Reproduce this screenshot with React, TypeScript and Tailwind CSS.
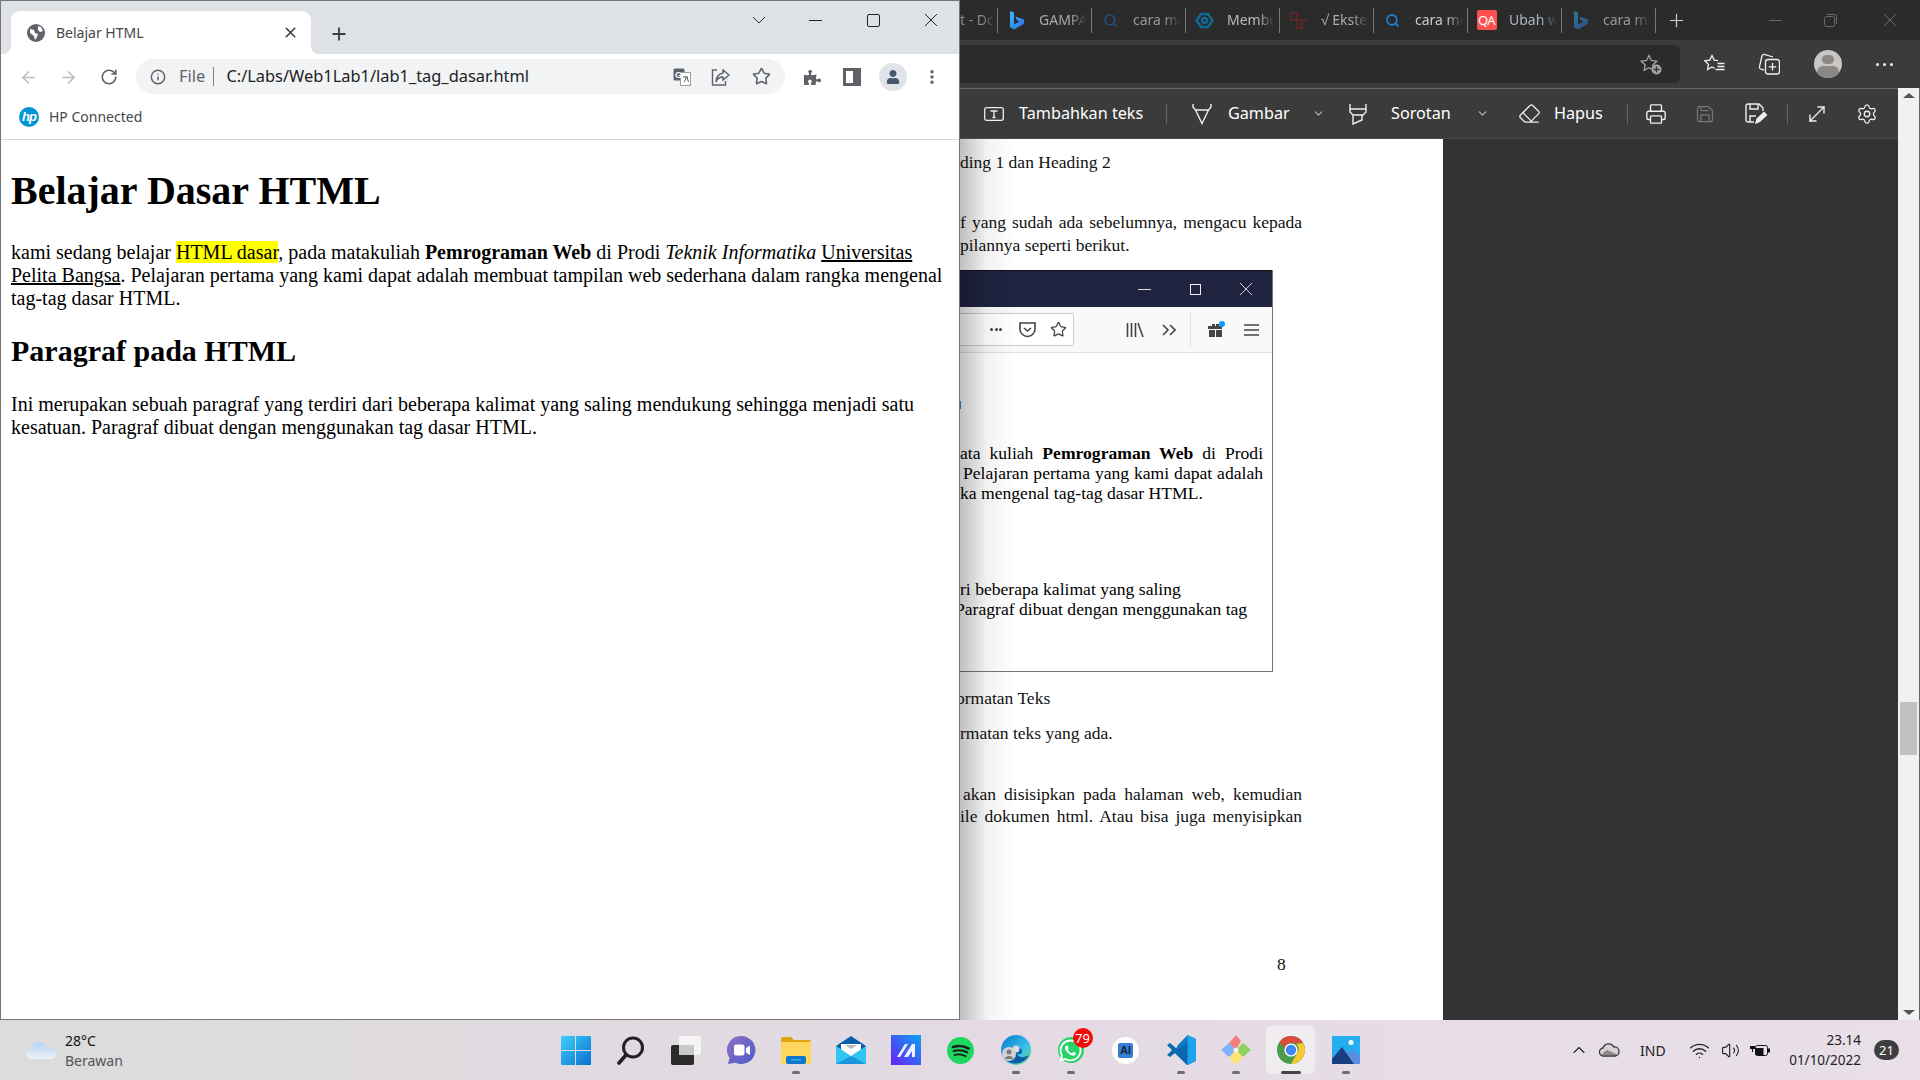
import type { ReactNode } from "react";
import {
  ArrowLeft,
  ArrowRight,
  ChevronDown,
  ChevronUp,
  EllipsisVertical,
  Eraser,
  Info,
  MoveDiagonal,
  Plus,
  Printer,
  RotateCw,
  Save,
  Search,
  Settings,
  Star,
  Volume2,
  Wifi,
  X,
} from "lucide-react";
import { FaPuzzlePiece, FaUser, FaWhatsapp } from "react-icons/fa";

function BingIcon({ dim }: { dim?: boolean }) {
  return (
    <svg width="16" height="20" viewBox="0 0 16 20" className={dim ? "opacity-50" : ""}>
      <defs>
        <linearGradient id="bingA" x1="0" y1="0" x2="1" y2="1">
          <stop offset="0" stopColor="#37bdff" />
          <stop offset="1" stopColor="#2f6fe8" />
        </linearGradient>
      </defs>
      <path d="M1 1l4 1.5v12l5.5-3-2.6-1.3L6.4 6.5 15 9.6v4.2L5 19.5 1 17z" fill="url(#bingA)" />
    </svg>
  );
}

function TabDivider() {
  return <div className="w-[1px] h-[25px] bg-[#777] shrink-0" />;
}

function EdgeTab({ icon, label, textClass }: { icon: ReactNode; label: string; textClass: string }) {
  return (
    <>
      <div className="w-[40px] shrink-0 pr-[3px] flex justify-center items-center">{icon}</div>
      <div
        className={`w-[48px] ml-[1px] mr-[4px] -mt-[2px] overflow-hidden whitespace-nowrap text-[14px] [mask-image:linear-gradient(to_right,black_65%,transparent)] ${textClass}`}
      >
        {label}
      </div>
      <TabDivider />
    </>
  );
}

function ChromeWindow() {
  return (
    <div className="w-[960px] shrink-0 flex flex-col bg-white border border-[#777] border-b-[#777]">
      <div className="h-[53px] bg-[#dee1e6] flex">
        <div className="relative self-end ml-[10px] w-[300px] h-[43px] bg-white rounded-t-[9px] flex items-center pl-[16px] pr-[12px]">
          <svg className="absolute -left-[8px] bottom-0" width="8" height="8" viewBox="0 0 8 8">
            <path d="M8 0v8H0a8 8 0 0 0 8-8z" fill="#fff" />
          </svg>
          <svg className="absolute -right-[8px] bottom-0" width="8" height="8" viewBox="0 0 8 8">
            <path d="M0 0v8h8a8 8 0 0 1-8-8z" fill="#fff" />
          </svg>
          <svg width="18" height="18" viewBox="0 0 18 18">
            <circle cx="9" cy="9" r="9" fill="#5f6368" />
            <path d="M3 5l4 1 1 3 3 1-1 3-2 3-1-4-4-3zM11 2l3 1 2 4-3 1-2-2z" fill="#fff" />
          </svg>
          <span className="ml-[11px] text-[14px] text-[#45474a] whitespace-nowrap">Belajar HTML</span>
          <X size={17} strokeWidth={2.2} className="ml-auto text-[#3c4043]" />
        </div>
        <Plus size={20} strokeWidth={2.2} className="self-center mt-[13px] ml-[18px] text-[#3c4043]" />
        <div className="ml-auto self-start h-[38px] flex items-center text-[#222]">
          <div className="w-[55px] flex justify-center">
            <svg width="14" height="8" viewBox="0 0 14 8" fill="none" stroke="#333">
              <path d="M1 1l6 6 6-6" />
            </svg>
          </div>
          <div className="w-[58px] flex justify-center">
            <div className="w-[13px] h-[1px] bg-[#222]" />
          </div>
          <div className="w-[58px] flex justify-center">
            <div className="w-[13px] h-[13px] border border-[#222] rounded-[2px]" />
          </div>
          <div className="w-[57px] flex justify-center">
            <svg width="14" height="14" viewBox="0 0 14 14" stroke="#222">
              <path d="M1 1l12 12M13 1L1 13" />
            </svg>
          </div>
        </div>
      </div>

      <div className="h-[46px] flex items-center pl-[7px]">
        <div className="w-[40px] flex justify-center">
          <ArrowLeft size={19} className="text-[#bcbdbf]" />
        </div>
        <div className="w-[40px] flex justify-center">
          <ArrowRight size={19} className="text-[#bcbdbf]" />
        </div>
        <div className="w-[41px] flex justify-center">
          <RotateCw size={18} strokeWidth={2.2} className="text-[#5f6368]" />
        </div>
        <div className="ml-[7px] -mt-[1px] w-[649px] h-[35px] rounded-full bg-[#f1f3f4] flex items-center pl-[14px]">
          <Info size={16} strokeWidth={2.2} className="text-[#5f6368]" />
          <span className="ml-[13px] text-[16.500px] text-[#5f6368]">File</span>
          <div className="ml-[8px] w-[1px] h-[19px] bg-[#7d8084]" />
          <span className="ml-[12px] text-[16.400px] text-[#202124] whitespace-nowrap">C:/Labs/Web1Lab1/lab1_tag_dasar.html</span>
          <svg className="ml-auto" width="18" height="18" viewBox="0 0 18 18">
            <rect x="0.5" y="0.5" width="11" height="12" rx="1.5" fill="#5f6368" />
            <rect x="7.5" y="4.5" width="10" height="13" fill="#fff" stroke="#9aa0a6" />
            <text x="2" y="10" fontSize="9" fontWeight="700" fill="#fff" fontFamily="Liberation Sans">G</text>
            <path d="M10 9h5M12.5 8v1M11 14l3-5 1.500 5" stroke="#5f6368" fill="none" />
          </svg>
          <svg className="ml-[20px]" width="20" height="18" viewBox="0 0 20 18" fill="none" stroke="#5f6368" strokeWidth="1.4">
            <path d="M6 2H1.5v15h13v-4" />
            <path d="M12 2l6 5-6 5V9C8 9 6 11 5 14c0-5 2-8 7-9z" />
          </svg>
          <Star size={19} strokeWidth={2} className="ml-[21px] mr-[14px] text-[#5f6368]" />
        </div>
        <div className="ml-[7px] w-[40px] flex justify-center">
          <FaPuzzlePiece size={17} className="text-[#5f6368]" />
        </div>
        <div className="w-[40px] flex justify-center">
          <div className="w-[18px] h-[18px] bg-white border-[3px] border-r-[8px] border-[#5f6368]" />
        </div>
        <div className="w-[41px] flex justify-center">
          <div className="w-[28px] h-[28px] rounded-full bg-[#e0e3e8] flex items-center justify-center">
            <FaUser size={14} className="text-[#47566e]" />
          </div>
        </div>
        <div className="w-[38px] flex justify-center">
          <EllipsisVertical size={18} strokeWidth={2.6} className="text-[#5f6368]" />
        </div>
      </div>

      <div className="h-[40px] flex items-center pl-[18px] pb-[6px] border-b border-[#d8d8d8]">
        <div className="w-[20px] h-[20px] rounded-full bg-[#0096d6] flex items-center justify-center">
          <span className="text-[13px] leading-[13px] text-white italic font-bold font-['Liberation_Sans',sans-serif] tracking-[-1px]">hp</span>
        </div>
        <span className="ml-[10px] text-[14px] text-[#45474a]">HP Connected</span>
      </div>

      <div className="flex-1 pl-[10px] text-black font-['Liberation_Serif',serif]">
        <h1 className="mt-[28px] text-[40px] leading-[46px] font-bold">Belajar Dasar HTML</h1>
        <p className="mt-[27px] w-[940px] text-[20px] leading-[23px]">
          kami sedang belajar <mark className="bg-[#ffff00]">HTML dasar</mark>, pada matakuliah <b>Pemrograman Web</b> di Prodi <i>Teknik Informatika</i>{" "}
          <u>Universitas Pelita Bangsa</u>. Pelajaran pertama yang kami dapat adalah membuat tampilan web sederhana dalam rangka mengenal tag-tag dasar HTML.
        </p>
        <h2 className="mt-[24px] text-[30px] leading-[34px] font-bold">Paragraf pada HTML</h2>
        <p className="mt-[25px] w-[940px] text-[20px] leading-[23px]">
          Ini merupakan sebuah paragraf yang terdiri dari beberapa kalimat yang saling mendukung sehingga menjadi satu kesatuan. Paragraf dibuat dengan menggunakan tag dasar HTML.
        </p>
      </div>
    </div>
  );
}

function DocShot() {
  return (
    <div className="mt-[14px] w-[313px] h-[402px] border-r border-b border-[#777] flex flex-col font-['Liberation_Serif',serif] text-[17.600px] leading-[20px] text-black">
      <div className="h-[37px] bg-[#1f2340] border-t border-[#111] flex items-center">
        <div className="ml-[178px] w-[13px] h-[1px] bg-[#ddd]" />
        <div className="ml-[39px] w-[11px] h-[11px] border border-[#eee]" />
        <svg className="ml-[39px]" width="12" height="12" viewBox="0 0 12 12" stroke="#ccc">
          <path d="M0 0l12 12M12 0L0 12" />
        </svg>
      </div>
      <div className="h-[46px] bg-[#f9f9fa] border-b border-[#e0e0e0] flex items-center">
        <div className="w-[114px] h-[33px] bg-white border border-[#ccc] border-l-0 rounded-r-[2px] flex items-center">
          <span className="ml-[30px] w-[12px] flex justify-between">
            <i className="w-[3px] h-[3px] rounded-full bg-[#444]" />
            <i className="w-[3px] h-[3px] rounded-full bg-[#444]" />
            <i className="w-[3px] h-[3px] rounded-full bg-[#444]" />
          </span>
          <svg className="ml-[17px]" width="17" height="16" viewBox="0 0 17 16" fill="none" stroke="#444" strokeWidth="1.6">
            <path d="M1 1h15v6a7.5 7.5 0 0 1-15 0z" />
            <path d="M5 6l3.5 3L12 6" />
          </svg>
          <Star size={17} strokeWidth={1.8} className="ml-[14px] text-[#444]" />
        </div>
        <svg className="ml-[52px]" width="18" height="16" viewBox="0 0 18 16" fill="none" stroke="#444" strokeWidth="1.6">
          <path d="M1.5 1v14M5.5 1v14M9.5 1v14M12 1l5 14" />
        </svg>
        <svg className="ml-[18px]" width="14" height="12" viewBox="0 0 14 12" fill="none" stroke="#444" strokeWidth="1.6">
          <path d="M1 1l5 5-5 5M8 1l5 5-5 5" />
        </svg>
        <div className="ml-[14px] w-[1px] h-[36px] bg-[#e2e2e2]" />
        <svg className="ml-[16px]" width="18" height="18" viewBox="0 0 18 18">
          <path d="M1 5h14v3H1zM2 9h6v7H2zM9 9h6v7H9zM5 3h3v2H5zM9 3h3v2H9z" fill="#444" />
          <circle cx="15" cy="3" r="3" fill="#0a9dff" />
        </svg>
        <svg className="ml-[19px]" width="15" height="14" viewBox="0 0 15 14" stroke="#444" strokeWidth="1.4">
          <path d="M0 2h15M0 7h15M0 12h15" />
        </svg>
      </div>
      <div className="mt-[48px] w-[1px] h-[8px] bg-[#3b82f6]" />
      <div className="mt-[34px] w-[303px] whitespace-nowrap [text-align-last:justify]">
        ata kuliah <b>Pemrograman Web</b> di Prodi
      </div>
      <div className="w-[303px] pl-[3px] whitespace-nowrap [text-align-last:justify]">Pelajaran pertama yang kami dapat adalah</div>
      <div className="whitespace-nowrap">ka mengenal tag-tag dasar HTML.</div>
      <div className="mt-[76px] whitespace-nowrap">ri beberapa kalimat yang saling</div>
      <div className="-ml-[5px] whitespace-nowrap">Paragraf dibuat dengan menggunakan tag</div>
    </div>
  );
}

function EdgeWindow() {
  return (
    <div className="w-[960px] shrink-0 flex flex-col text-[#eee]">
      <div className="h-[40px] bg-[#2b2b2b] flex items-center overflow-hidden">
        <span className="w-[37px] -mt-[2px] shrink-0 overflow-hidden whitespace-nowrap text-[14px] text-[#8a8a8a] [mask-image:linear-gradient(to_right,black_60%,transparent)]">t - Dc</span>
        <TabDivider />
        <EdgeTab icon={<BingIcon />} label="GAMPAR" textClass="text-[#a8a8a8]" />
        <EdgeTab icon={<Search size={15} className="text-[#1d5c92]" />} label="cara me" textClass="text-[#999]" />
        <EdgeTab
          icon={
            <svg width="19" height="17" viewBox="0 0 19 17" fill="none" stroke="#0f6a96" strokeWidth="2.4">
              <path d="M1.5 8.5L6 2h7l4.5 6.5L13 15H6z" />
              <circle cx="9.5" cy="8.5" r="2.5" />
            </svg>
          }
          label="Membuat"
          textClass="text-[#bbb]"
        />
        <EdgeTab
          icon={
            <svg width="19" height="19" viewBox="0 0 19 19" fill="none" stroke="#6b2424" strokeWidth="1.6">
              <path d="M2 2h6v7H2zM8 9h5v8H8zM14 9h4" />
            </svg>
          }
          label="√ Ekstensi"
          textClass="text-[#aaa]"
        />
        <EdgeTab icon={<Search size={15} strokeWidth={2.6} className="text-[#1b82d8]" />} label="cara me" textClass="text-[#c8c8c8]" />
        <EdgeTab
          icon={
            <div className="w-[20px] h-[20px] rounded-[2px] bg-[#ff5050] text-white text-[13px] leading-[20px] text-center tracking-[-0.5px]">QA</div>
          }
          label="Ubah w"
          textClass="text-[#a9b4c4]"
        />
        <EdgeTab icon={<BingIcon dim />} label="cara me" textClass="text-[#999]" />
        <Plus size={21} strokeWidth={1.4} className="ml-[10px] text-[#ccc]" />
        <div className="ml-[82px] w-[13px] h-[1px] bg-[#6b6b6b]" />
        <svg className="ml-[42px]" width="13" height="13" viewBox="0 0 13 13" fill="none" stroke="#6b6b6b">
          <rect x="0.5" y="2.5" width="10" height="10" rx="2" />
          <path d="M3 .5h7a2.5 2.5 0 0 1 2.5 2.5v7" />
        </svg>
        <svg className="ml-[46px]" width="14" height="14" viewBox="0 0 14 14" stroke="#6b6b6b">
          <path d="M1 1l12 12M13 1L1 13" />
        </svg>
      </div>

      <div className="h-[48px] bg-[#3b3b3b] flex items-center">
        <div className="w-[720px] h-[38px] bg-[#2b2b2b] rounded-r-[6px] flex items-center justify-end pr-[18px]">
          <svg width="22" height="21" viewBox="0 0 22 21" fill="none" stroke="#a5a5a5" strokeWidth="1.3">
            <path d="M9 1.5l2.4 5 5.4.7-4 3.7 1 5.3L9 13.7l-4.8 2.6 1-5.4-4-3.7 5.4-.7z" />
            <circle cx="16.5" cy="15.5" r="5" fill="#a5a5a5" stroke="none" />
            <path d="M16.5 12.5v6M13.5 15.5h6" stroke="#333" />
          </svg>
        </div>
        <svg className="ml-[24px]" width="21" height="20" viewBox="0 0 21 20" fill="none" stroke="#f2f2f2" strokeWidth="1.3">
          <path d="M14 6.700L10.200 6.100 8 1.500 5.800 6.100.8 6.800l3.700 3.600-.9 5.100L8 13l2.500 1.300" />
          <path d="M13.500 9.500h7M13.500 12.500h7M11.500 15.500h9" />
        </svg>
        <svg className="ml-[33px]" width="22" height="22" viewBox="0 0 22 22" fill="none" stroke="#f2f2f2" strokeWidth="1.3">
          <path d="M6 17l-3-.8a2 2 0 0 1-1.5-2.5L4 3a2 2 0 0 1 2.400-1.500L15 4" />
          <rect x="7.500" y="6.500" width="14" height="14.500" rx="2.500" />
          <path d="M14.500 10v7.500M10.700 13.800h7.600" />
        </svg>
        <div className="ml-[34px] w-[28px] h-[28px] rounded-full bg-[#c9c6c3] overflow-hidden flex flex-col items-center">
          <div className="mt-[5px] w-[12px] h-[12px] rounded-full bg-[#8b8784]" />
          <div className="mt-[2px] w-[22px] h-[16px] rounded-full bg-[#8b8784]" />
        </div>
        <div className="ml-[34px] flex gap-[4px]">
          <i className="w-[3px] h-[3px] rounded-full bg-[#eee]" />
          <i className="w-[3px] h-[3px] rounded-full bg-[#eee]" />
          <i className="w-[3px] h-[3px] rounded-full bg-[#eee]" />
        </div>
      </div>

      <div className="flex-1 flex min-h-0">
        <div className="flex-1 flex flex-col min-w-0">
          <div className="h-[51px] bg-[#3b3b3b] border-t border-[#666] border-b border-b-[#4a4a4a] flex items-center text-[16.200px] text-white whitespace-nowrap">
            <svg className="ml-[24px]" width="20" height="16" viewBox="0 0 20 16" fill="none" stroke="#eee" strokeWidth="1.3">
              <rect x="0.7" y="1.700" width="18.600" height="12.600" rx="2" />
              <path d="M6.500 5h7M10 5v6.500M8.500 11.500h3" />
            </svg>
            <span className="ml-[15px] w-[124px]">Tambahkan teks</span>
            <div className="ml-[23px] w-[1px] h-[20px] bg-[#666]" />
            <svg className="ml-[25px]" width="20" height="22" viewBox="0 0 20 22" fill="none" stroke="#eee" strokeWidth="1.4">
              <path d="M1 1v3l2.500 3h13L19 4V1M3.500 7L10 20.500 16.500 7" />
            </svg>
            <span className="ml-[16px] w-[61px]">Gambar</span>
            <ChevronDown size={13} className="ml-[23px] text-[#bbb]" />
            <svg className="ml-[23px]" width="20" height="22" viewBox="0 0 20 22" fill="none" stroke="#eee" strokeWidth="1.4">
              <path d="M2 1v8l3 3h10l3-3V1M2 6h16M5 12v9l9-4v-5" />
            </svg>
            <span className="ml-[23px] w-[61px]">Sorotan</span>
            <ChevronDown size={13} className="ml-[24px] text-[#bbb]" />
            <Eraser size={23} strokeWidth={1.3} className="ml-[29px] text-[#eee]" />
            <span className="ml-[13px] w-[49px]">Hapus</span>
            <div className="ml-[24px] w-[1px] h-[20px] bg-[#666]" />
            <Printer size={22} strokeWidth={1.5} className="ml-[17px] text-[#eee]" />
            <Save size={20} strokeWidth={1.5} className="ml-[28px] text-[#777]" />
            <svg className="ml-[30px]" width="22" height="21" viewBox="0 0 22 21" fill="none" stroke="#eee" strokeWidth="1.4">
              <path d="M9 19H3a2 2 0 0 1-2-2V3a2 2 0 0 1 2-2h11l4 4v3" />
              <path d="M5 1v5h8V1M5 19v-6h6" />
              <path d="M11 20l1-4 7-6.500 2.500 2.500-7 6.500z" fill="#eee" />
            </svg>
            <div className="ml-[20px] w-[1px] h-[20px] bg-[#666]" />
            <MoveDiagonal size={24} strokeWidth={1.4} className="ml-[17px] text-[#eee]" />
            <Settings size={22} strokeWidth={1.4} className="ml-[27px] text-[#eee]" />
          </div>

          <div className="flex-1 flex bg-[#333] min-h-0">
            <div className="relative w-[483px] shrink-0 bg-white overflow-hidden text-[#111] font-['Liberation_Serif',serif] text-[17.500px] leading-[22px]">
              <div className="absolute left-0 inset-y-0 w-[55px] bg-gradient-to-r from-black/25 via-black/5 to-transparent pointer-events-none" />
              <div className="mt-[12px] whitespace-nowrap">ding 1 dan Heading 2</div>
              <div className="mt-[38px] w-[342px] whitespace-nowrap [text-align-last:justify]">f yang sudah ada sebelumnya, mengacu kepada</div>
              <div className="mt-[1px] whitespace-nowrap">pilannya seperti berikut.</div>
              <DocShot />
              <div className="mt-[15px] -ml-[4px] whitespace-nowrap">ormatan Teks</div>
              <div className="mt-[13px] whitespace-nowrap">rmatan teks yang ada.</div>
              <div className="mt-[39px] w-[342px] pl-[3px] whitespace-nowrap [text-align-last:justify]">akan disisipkan pada halaman web, kemudian</div>
              <div className="w-[342px] whitespace-nowrap [text-align-last:justify]">ile dokumen html. Atau bisa juga menyisipkan</div>
              <div className="mt-[126px] ml-[317px]">8</div>
            </div>
          </div>
        </div>

        <div className="w-[22px] shrink-0 bg-[#f1f1f1] border-r border-[#666] flex flex-col items-center">
          <div className="mt-[5px] w-0 h-0 border-x-[6px] border-x-transparent border-b-[5px] border-b-[#555]" />
          <div className="mt-[604px] w-[17px] h-[53px] bg-[#c1c1c1]" />
          <div className="mt-auto mb-[5px] w-0 h-0 border-x-[6px] border-x-transparent border-t-[5px] border-t-[#555]" />
        </div>
      </div>
    </div>
  );
}

function TaskIcon({ children, running, active }: { children: ReactNode; running?: boolean; active?: boolean }) {
  return (
    <div className="relative w-[55px] h-[60px] flex flex-col items-center">
      {active && <div className="absolute left-[3px] top-[6px] w-[49px] h-[48px] rounded-[5px] bg-[#f0edf0]" />}
      <div className="relative mt-[15px] h-[30px] flex items-center justify-center">{children}</div>
      {running && <div className="relative mt-[6px] w-[8px] h-[3px] rounded-full bg-[#6e6e6e]" />}
      {active && <div className="relative mt-[6px] w-[20px] h-[3px] rounded-full bg-[#444]" />}
    </div>
  );
}

function Taskbar() {
  return (
    <div className="h-[60px] flex items-stretch bg-gradient-to-r from-[#dcdcdc] via-[#e3dae3] to-[#e8dfe9]">
      <div className="w-[548px] shrink-0 flex items-center pl-[26px]">
        <svg width="30" height="20" viewBox="0 0 30 20">
          <defs>
            <linearGradient id="cloudG" x1="0" y1="0" x2="0" y2="1">
              <stop offset="0" stopColor="#b5d2f3" />
              <stop offset="1" stopColor="#eef2f5" />
            </linearGradient>
          </defs>
          <path d="M5 19a5 5 0 0 1-1-10 9 9 0 0 1 8-7 8 8 0 0 1 8 5 6 6 0 0 1 4 0 6 6 0 0 1 1 12z" fill="url(#cloudG)" />
        </svg>
        <div className="ml-[9px] text-[14px] leading-[20px] mt-[1px]">
          <div className="text-[#111]">28°C</div>
          <div className="text-[#555]">Berawan</div>
        </div>
      </div>

      <div className="flex">
        <TaskIcon>
          <svg width="30" height="29" viewBox="0 0 30 29">
            <defs>
              <linearGradient id="winG" x1="0" y1="0" x2="1" y2="1">
                <stop offset="0" stopColor="#3fd0fb" />
                <stop offset="1" stopColor="#0a6fd0" />
              </linearGradient>
            </defs>
            <path d="M1 0h13v14H0V1a1 1 0 0 1 1-1zM15 0h14a1 1 0 0 1 1 1v13H15zM0 15h14v14H1a1 1 0 0 1-1-1zM15 15h15v13a1 1 0 0 1-1 1H15z" fill="url(#winG)" />
          </svg>
        </TaskIcon>
        <TaskIcon>
          <svg width="28" height="29" viewBox="0 0 28 29" fill="none" stroke="#222" strokeWidth="3">
            <circle cx="16" cy="11.500" r="9.500" />
            <path d="M9 19L2 27" strokeLinecap="round" strokeWidth="3.600" />
          </svg>
        </TaskIcon>
        <TaskIcon>
          <div className="relative w-[30px] h-[29px]">
            <div className="absolute right-0 top-0 w-[22px] h-[19px] rounded-[2px] bg-[#f4f4f4]" />
            <div className="absolute left-0 bottom-0 w-[23px] h-[20px] rounded-[2px] bg-[#2b2b2b]" />
            <div className="absolute right-[7px] top-[9px] w-[15px] h-[10px] bg-[#c9c9c9]" />
          </div>
        </TaskIcon>
        <TaskIcon>
          <svg width="30" height="30" viewBox="0 0 30 30">
            <defs>
              <linearGradient id="teamsG" x1="0" y1="0" x2="1" y2="1">
                <stop offset="0" stopColor="#8d6fc4" />
                <stop offset="1" stopColor="#4f5cc8" />
              </linearGradient>
            </defs>
            <path d="M15.500 1a14 14 0 1 1-6 26.700L2 29l1.500-6A14 14 0 0 1 15.500 1z" fill="url(#teamsG)" />
            <rect x="8" y="9.500" width="10.500" height="11" rx="2" fill="#fff" />
            <path d="M20 13l4-2.500v9.500L20 17.500z" fill="#fff" />
          </svg>
        </TaskIcon>
        <TaskIcon running>
          <svg width="30" height="27" viewBox="0 0 30 27">
            <path d="M0 2a2 2 0 0 1 2-2h8l3 3h15a2 2 0 0 1 2 2v3H0z" fill="#dea30f" />
            <path d="M0 5h30v20a2 2 0 0 1-2 2H2a2 2 0 0 1-2-2z" fill="#ffd65c" />
            <rect x="5" y="19" width="20" height="8" rx="2" fill="#0c77cc" />
            <rect x="10" y="22" width="10" height="1.500" fill="#35a8ea" />
          </svg>
        </TaskIcon>
        <TaskIcon>
          <svg width="30" height="28" viewBox="0 0 30 28">
            <path d="M0 10L15 0l15 10v18H0z" fill="#0a5eab" />
            <path d="M5 8h20v8l-10 6-10-6z" fill="#fff" />
            <path d="M0 10l15 10 15-10v18H0z" fill="#32c5f4" />
            <path d="M0 28l15-8 15 8z" fill="#1a96db" />
            <path d="M9 9h12l-6 4z" fill="#b9b9b9" />
          </svg>
        </TaskIcon>
        <TaskIcon>
          <svg width="30" height="30" viewBox="0 0 30 30">
            <defs>
              <linearGradient id="mG" x1="1" y1="0" x2="0" y2="1">
                <stop offset="0" stopColor="#0aa3f2" />
                <stop offset="1" stopColor="#6a20f5" />
              </linearGradient>
            </defs>
            <rect width="30" height="30" fill="url(#mG)" />
            <path d="M6 22l8-13h3l-8 13zM13 22l8-13h3v13h-3v-6l-4 6z" fill="#f2f2ff" />
          </svg>
        </TaskIcon>
        <TaskIcon>
          <svg width="27" height="27" viewBox="0 0 27 27" fill="none" stroke="#1d1d1d" strokeLinecap="round">
            <circle cx="13.500" cy="13.500" r="13.500" fill="#1ed760" stroke="none" />
            <path d="M6 10c5-1.500 11-1 15.500 1.500" strokeWidth="2.600" />
            <path d="M6.800 14c4.500-1.200 9.500-.8 13.400 1.400" strokeWidth="2.200" />
            <path d="M7.500 18c4-1 8-.6 11.400 1.200" strokeWidth="1.800" />
          </svg>
        </TaskIcon>
        <TaskIcon running>
          <svg width="30" height="30" viewBox="0 0 30 30">
            <defs>
              <linearGradient id="edgeG" x1="0" y1="0" x2="1" y2="1">
                <stop offset="0" stopColor="#0c74c4" />
                <stop offset="0.600" stopColor="#35c1f1" />
                <stop offset="1" stopColor="#6fdc5e" />
              </linearGradient>
            </defs>
            <circle cx="15" cy="15" r="15" fill="url(#edgeG)" />
            <path d="M14 14c3-2 8-1 7 3-.7 3-5 3-5 0 0 5 5 7 12 3-3 6-10 10-17 8-5-1-8-5-8-9 2-4 8-6 11-5z" fill="#0b5fa8" />
            <circle cx="15" cy="14" r="3.500" fill="#e3dae3" />
            <circle cx="8" cy="19" r="7" fill="#d6d0d2" />
            <circle cx="8" cy="17" r="2.500" fill="#7d7a7a" />
            <path d="M3.500 24c1-4 8-4 9 0z" fill="#7d7a7a" />
          </svg>
        </TaskIcon>
        <TaskIcon running>
          <div className="relative">
            <div className="w-[26px] h-[26px] rounded-full bg-[#25d366] flex items-center justify-center">
              <FaWhatsapp size={25} className="text-white" />
            </div>
            <div className="absolute -right-[9px] -top-[9px] w-[20px] h-[20px] rounded-full bg-[#f20d0d] text-white text-[13px] leading-[20px] text-center">79</div>
          </div>
        </TaskIcon>
        <TaskIcon>
          <div className="w-[27px] h-[27px] rounded-full bg-white flex items-center justify-center">
            <div className="w-[15px] h-[15px] rounded-[2px] bg-[#3a7bd5] text-[#11233f] text-[11px] leading-[15px] font-bold text-center font-['Liberation_Sans',sans-serif]">AI</div>
          </div>
        </TaskIcon>
        <TaskIcon running>
          <svg width="30" height="30" viewBox="0 0 30 30">
            <path d="M21.500 0L30 4v22l-8.500 4L8 17l4-7z" fill="#0a7bc4" />
            <path d="M21.500 0L30 4v22l-8.500 4z" fill="#1fa2ee" />
            <path d="M21.500 7.500v15L11 15zM1 10l3-2 17 14.500V30L9 18l-5 4-3-2 5-5z" fill="#0a68ad" />
          </svg>
        </TaskIcon>
        <TaskIcon running>
          <svg width="30" height="30" viewBox="0 0 30 30">
            <path d="M15 15L8 8l7-8 5 6z" fill="#f27f7a" />
            <path d="M15 15l7-7 8 7-8 7z" fill="#8fd15f" />
            <path d="M15 15l7 7-7 8-7-8z" fill="#ffe275" />
            <path d="M15 15l-7 7-8-7 8-7z" fill="#7fb2ff" />
            <circle cx="15" cy="15" r="2.600" fill="#f6f1e7" />
          </svg>
        </TaskIcon>
        <TaskIcon active>
          <svg width="28" height="28" viewBox="0 0 28 28">
            <circle cx="14" cy="14" r="14" fill="#4a9d46" />
            <path d="M14 0a14 14 0 0 1 12.100 7H14a7 7 0 0 0-6.600 4.700L2.500 6A14 14 0 0 1 14 0z" fill="#dd4b3e" />
            <path d="M26.100 7A14 14 0 0 1 14 28l6-10.500A7 7 0 0 0 19.500 8z" fill="#fcc934" />
            <circle cx="14" cy="14" r="6.600" fill="#fff" />
            <circle cx="14" cy="14" r="5.200" fill="#4285f4" />
          </svg>
        </TaskIcon>
        <TaskIcon running>
          <svg width="28" height="28" viewBox="0 0 28 28">
            <rect width="28" height="28" fill="#23aef0" rx="1" />
            <circle cx="19" cy="6.500" r="2.500" fill="#fff" />
            <path d="M0 22L10 11l6 6 4-4 8 7v8H0z" fill="#5b8ee0" />
            <path d="M0 23l10-12 12 17H0z" fill="#16407f" />
          </svg>
        </TaskIcon>
      </div>

      <div className="ml-auto flex items-center text-[#222]">
        <ChevronUp size={20} strokeWidth={1.3} />
        <svg className="ml-[10px]" width="21" height="14" viewBox="0 0 21 14">
          <path d="M5 13a4 4 0 0 1-1-8 6 6 0 0 1 11-1 4.500 4.500 0 0 1 1 9z" fill="#d8d2d6" stroke="#333" strokeWidth="1.300" />
          <path d="M1.500 12L8 7l5 2 6 3z" fill="#8a8a8a" />
        </svg>
        <span className="ml-[20px] text-[14px] w-[26px]">IND</span>
        <Wifi size={21} strokeWidth={1.6} className="ml-[23px]" />
        <Volume2 size={19} strokeWidth={1.4} className="ml-[11px]" />
        <svg className="ml-[10px]" width="20" height="15" viewBox="0 0 20 15">
          <path d="M1 0v3M4 0v3M0 3h5v3H0zM2 6h1v3H2z" fill="#111" />
          <rect x="5.500" y="2.500" width="12" height="10" rx="2" fill="#e8dfe9" stroke="#111" />
          <rect x="5.500" y="5" width="8" height="7" fill="#111" />
          <rect x="18" y="5.500" width="2" height="4" fill="#111" />
        </svg>
        <div className="ml-[11px] w-[80px] text-right text-[13.500px] leading-[20px]">
          <div>23.14</div>
          <div>01/10/2022</div>
        </div>
        <div className="ml-[13px] mr-[21px] w-[25px] h-[20px] rounded-full bg-[#3e3e3e] text-white text-[13px] leading-[20px] text-center">21</div>
      </div>
    </div>
  );
}

export default function App() {
  return (
    <div className="w-[1920px] h-[1080px] flex flex-col overflow-hidden font-['Noto_Sans','Open_Sans',sans-serif]">
      <div className="h-[1020px] flex">
        <ChromeWindow />
        <EdgeWindow />
      </div>
      <Taskbar />
    </div>
  );
}
